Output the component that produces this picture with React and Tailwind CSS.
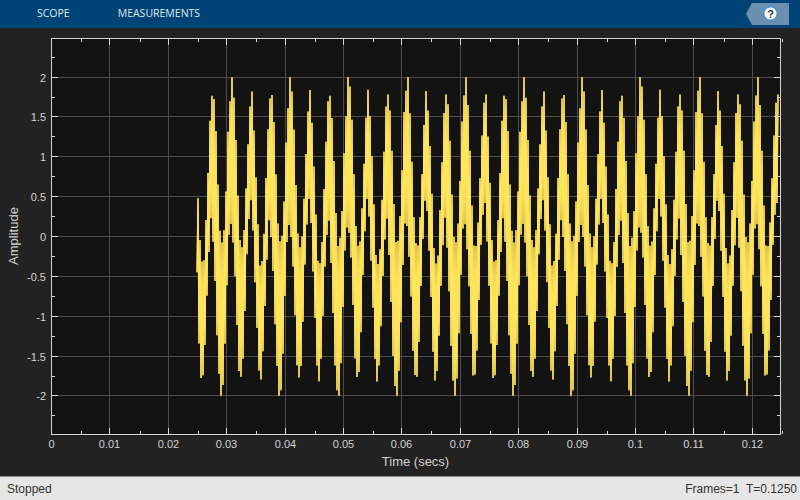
// Scope window: toolstrip, plot area, status bar
const GRID_X = [109, 168, 226, 285, 343, 401, 460, 518, 577, 635, 693, 752];
const X_LABELS = ['0.01', '0.02', '0.03', '0.04', '0.05', '0.06', '0.07', '0.08', '0.09', '0.1', '0.11', '0.12'];
const GRID_Y = [77, 116, 156, 196, 236, 276, 316, 356, 395];
const Y_LABELS = ['2', '1.5', '1', '0.5', '0', '-0.5', '-1', '-1.5', '-2'];
const MINOR_X = Array.from({ length: 13 }, (_, i) => Math.round(51.9 + (i + 0.5) * 58.4));
const MINOR_Y = [57, 97, 136, 176, 216, 256, 296, 336, 376, 415];

const PX_PER_SEC = 5840;
const toY = (v) => (236.5 - v * 79.6).toFixed(1);

// cheap repeatable jitter so the edges of the lobes look stepped
const jitter = (n) => {
  const s = Math.sin(n * 12.9898) * 43758.5453;
  return s - Math.floor(s);
};

const signal = () => {
  const pts = [];
  // one column every 2px, the trace swings between lo and hi inside it
  for (let col = 0; col < 291; col++) {
    const x = 197 + col * 2;
    const t = (x + 1 - 51.9) / PX_PER_SEC;
    const s = 1.05 * Math.sin(2 * Math.PI * 300 * t);
    const k = Math.floor(((t % 0.01) / 0.01) * 30);
    const rHi = 0.82 + 0.12 * Math.cos(2 * Math.PI * 100 * (t - 0.0306)) - 0.18 * jitter(k);
    const rLo = 0.82 + 0.16 * Math.cos(2 * Math.PI * 100 * (t - 0.0292)) - 0.2 * jitter(k + 40);
    const hi = Math.min(col === 0 ? 0.48 : s + rHi + 0.08, 2.0);
    const lo = Math.max(col === 0 ? -0.45 : s - rLo - 0.08, -2.0);
    pts.push(`${x},${toY(lo)}`, `${x + 1},${toY(hi)}`);
  }
  return pts.join(' ');
};

function Plot() {
  const trace = signal();
  return (
    <svg className="block w-[800px] h-[448px]" viewBox="0 28 800 448" fontFamily="'Liberation Sans', Arial, sans-serif">
      <rect x="51" y="38" width="730" height="397" fill="#131313" />
      {GRID_X.map((x) => (
        <line key={x} x1={x + 0.5} x2={x + 0.5} y1="39" y2="434" stroke="#4d4d4d" />
      ))}
      {GRID_Y.map((y) => (
        <line key={y} x1="52" x2="780" y1={y + 0.5} y2={y + 0.5} stroke="#4d4d4d" />
      ))}
      {/* drawn twice so the overlapping swings stay solid yellow */}
      <polyline points={trace} fill="none" stroke="#ffe45c" strokeWidth="1.3" strokeLinejoin="bevel" />
      <polyline points={trace} fill="none" stroke="#ffe45c" strokeWidth="1.1" strokeLinejoin="bevel" />
      <rect x="51.5" y="38.5" width="729" height="396" fill="none" stroke="#d6d6d6" />
      {GRID_X.map((x) => (
        <g key={x} stroke="#d6d6d6">
          <line x1={x + 0.5} x2={x + 0.5} y1="39" y2="45" />
          <line x1={x + 0.5} x2={x + 0.5} y1="428" y2="434" />
        </g>
      ))}
      {MINOR_X.map((x) => (
        <g key={x} stroke="#d6d6d6">
          <line x1={x + 0.5} x2={x + 0.5} y1="39" y2="42" />
          <line x1={x + 0.5} x2={x + 0.5} y1="431" y2="434" />
        </g>
      ))}
      {GRID_Y.map((y) => (
        <g key={y} stroke="#d6d6d6">
          <line x1="52" x2="58" y1={y + 0.5} y2={y + 0.5} />
          <line x1="774" x2="780" y1={y + 0.5} y2={y + 0.5} />
        </g>
      ))}
      {MINOR_Y.map((y) => (
        <g key={y} stroke="#d6d6d6">
          <line x1="52" x2="55" y1={y + 0.5} y2={y + 0.5} />
          <line x1="777" x2="780" y1={y + 0.5} y2={y + 0.5} />
        </g>
      ))}
      <g fill="#d2d2d2" fontSize="11">
        <text x="51.5" y="448" textAnchor="middle">0</text>
        {GRID_X.map((x, i) => (
          <text key={x} x={x + 0.5} y="448" textAnchor="middle">{X_LABELS[i]}</text>
        ))}
        {GRID_Y.map((y, i) => (
          <text key={y} x="46" y={y + 4.5} textAnchor="end">{Y_LABELS[i]}</text>
        ))}
      </g>
      <text x="415.5" y="466" textAnchor="middle" fontSize="13" fill="#d2d2d2">Time (secs)</text>
      <text transform="translate(18 236) rotate(-90)" textAnchor="middle" fontSize="13" fill="#d2d2d2">Amplitude</text>
    </svg>
  );
}

function HelpButton() {
  return (
    <svg className="block w-[44px] h-[22px]" viewBox="0 0 44 22" fontFamily="'Liberation Sans', Arial, sans-serif">
      <path d="M6 0H43V22H6L0 11Z" fill="#6b8fae" />
      <circle cx="24.5" cy="10.5" r="6.5" fill="#fff" stroke="#2f8de4" strokeWidth="0.8" />
      <text x="24.5" y="14.5" textAnchor="middle" fontSize="11" fontWeight="700" fill="#333">?</text>
    </svg>
  );
}

export default function App() {
  return (
    <div className="w-[800px] h-[500px] flex flex-col overflow-hidden bg-[#222222]">
      <div className="h-[28px] flex items-center bg-[#004376] text-[#dfe8f0] text-[10.5px] font-['Open_Sans',sans-serif]">
        <span className="ml-[37px]">SCOPE</span>
        <span className="ml-[48px]">MEASUREMENTS</span>
        <div className="ml-auto mr-[10px]">
          <HelpButton />
        </div>
      </div>
      <div className="flex-1">
        <Plot />
      </div>
      <div className="h-[24px] flex items-center justify-between pl-[7px] pr-[3px] border-t border-[#8c8c8c] bg-[#e6e6e6] text-[#333333] text-[12px] font-['Liberation_Sans',Arial,sans-serif]">
        <span>Stopped</span>
        <span className="whitespace-pre">Frames=1  T=0.1250</span>
      </div>
    </div>
  );
}
